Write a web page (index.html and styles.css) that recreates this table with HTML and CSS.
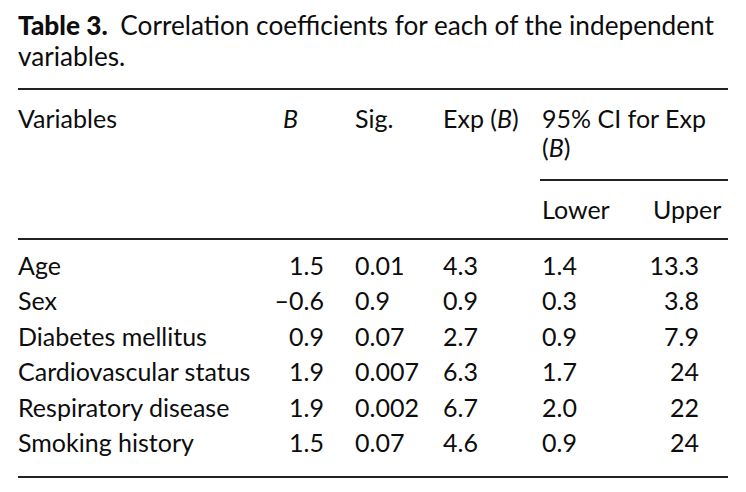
FILE: index.html
```html
<!DOCTYPE html>
<html>
<head>
<meta charset="utf-8">
<link rel="stylesheet" href="styles.css">
</head>
<body>
<div class="wrap">
  <p class="caption"><b class="cap-label">Table 3.</b> Correlation coefficients for each of the independent variables.</p>
  <table class="tbl">
    <colgroup>
      <col class="c-var"><col class="c-b"><col class="c-sig"><col class="c-exp"><col class="c-low"><col class="c-up">
    </colgroup>
    <thead>
      <tr>
        <th rowspan="2" class="h-var">Variables</th>
        <th rowspan="2" class="h-b"><i>B</i></th>
        <th rowspan="2" class="h-sig">Sig.</th>
        <th rowspan="2" class="h-exp">Exp (<i>B</i>)</th>
        <th colspan="2" class="h-ci"><div class="ci-label">95% CI for Exp<br>(<i>B</i>)</div></th>
      </tr>
      <tr>
        <th class="h-low">Lower</th>
        <th class="h-up">Upper</th>
      </tr>
    </thead>
    <tbody>
      <tr><td class="var">Age</td><td class="b">1.5</td><td class="sig">0.01</td><td class="exp">4.3</td><td class="low">1.4</td><td class="up">13.3</td></tr>
      <tr><td class="var">Sex</td><td class="b">–0.6</td><td class="sig">0.9</td><td class="exp">0.9</td><td class="low">0.3</td><td class="up">3.8</td></tr>
      <tr><td class="var">Diabetes mellitus</td><td class="b">0.9</td><td class="sig">0.07</td><td class="exp">2.7</td><td class="low">0.9</td><td class="up">7.9</td></tr>
      <tr><td class="var">Cardiovascular status</td><td class="b">1.9</td><td class="sig">0.007</td><td class="exp">6.3</td><td class="low">1.7</td><td class="up">24</td></tr>
      <tr><td class="var">Respiratory disease</td><td class="b">1.9</td><td class="sig">0.002</td><td class="exp">6.7</td><td class="low">2.0</td><td class="up">22</td></tr>
      <tr><td class="var">Smoking history</td><td class="b">1.5</td><td class="sig">0.07</td><td class="exp">4.6</td><td class="low">0.9</td><td class="up">24</td></tr>
    </tbody>
  </table>
</div>
</body>
</html>
```
FILE: styles.css
```css
html, body {
  margin: 0;
  padding: 0;
  background: #fff;
}
body {
  font-family: Lato, "Open Sans", "DejaVu Sans", sans-serif;
  color: #0d0d0d;
}
.wrap {
  padding: 10px 0 0 18px;
  width: 710px;
}
.caption {
  margin: 0 0 16px 0;
  width: 720px;
  font-size: 26.2px;
  line-height: 31px;
}
.cap-label {
  font-weight: 900;
  margin-right: 6px;
}
.tbl {
  width: 710px;
  table-layout: fixed;
  border-collapse: separate;
  border-spacing: 0;
  border-top: 2px solid #222;
  border-bottom: 2px solid #222;
  font-size: 25px;
  line-height: 29px;
}
.c-var { width: 254px; }
.c-b { width: 73px; }
.c-sig { width: 88px; }
.c-exp { width: 99px; }
.c-low { width: 111px; }
.c-up { width: 85px; }
th {
  font-weight: 400;
  text-align: left;
  vertical-align: top;
  padding: 13.8px 0 0 0;
  white-space: nowrap;
}
.tbl i {
  font-style: italic;
}
.h-b { padding-left: 11px; }
.h-sig, .h-exp { padding-left: 10px; }
.h-ci {
  padding: 13.8px 0 0 8px;
}
.ci-label {
  padding: 0 0 16.8px 2px;
  border-bottom: 2px solid #222;
}
.h-low, .h-up {
  padding: 14px 0 14px 10px;
}
td {
  padding: 3.25px 0;
  white-space: nowrap;
}
tbody tr:first-child td {
  border-top: 2px solid #222;
  padding-top: 11.2px;
}
tbody tr:last-child td {
  padding-bottom: 18.8px;
}
td.b {
  text-align: right;
  padding-right: 21px;
}
td.sig, td.exp, td.low {
  padding-left: 10px;
}
td.up {
  text-align: right;
  padding-right: 29px;
}
```
